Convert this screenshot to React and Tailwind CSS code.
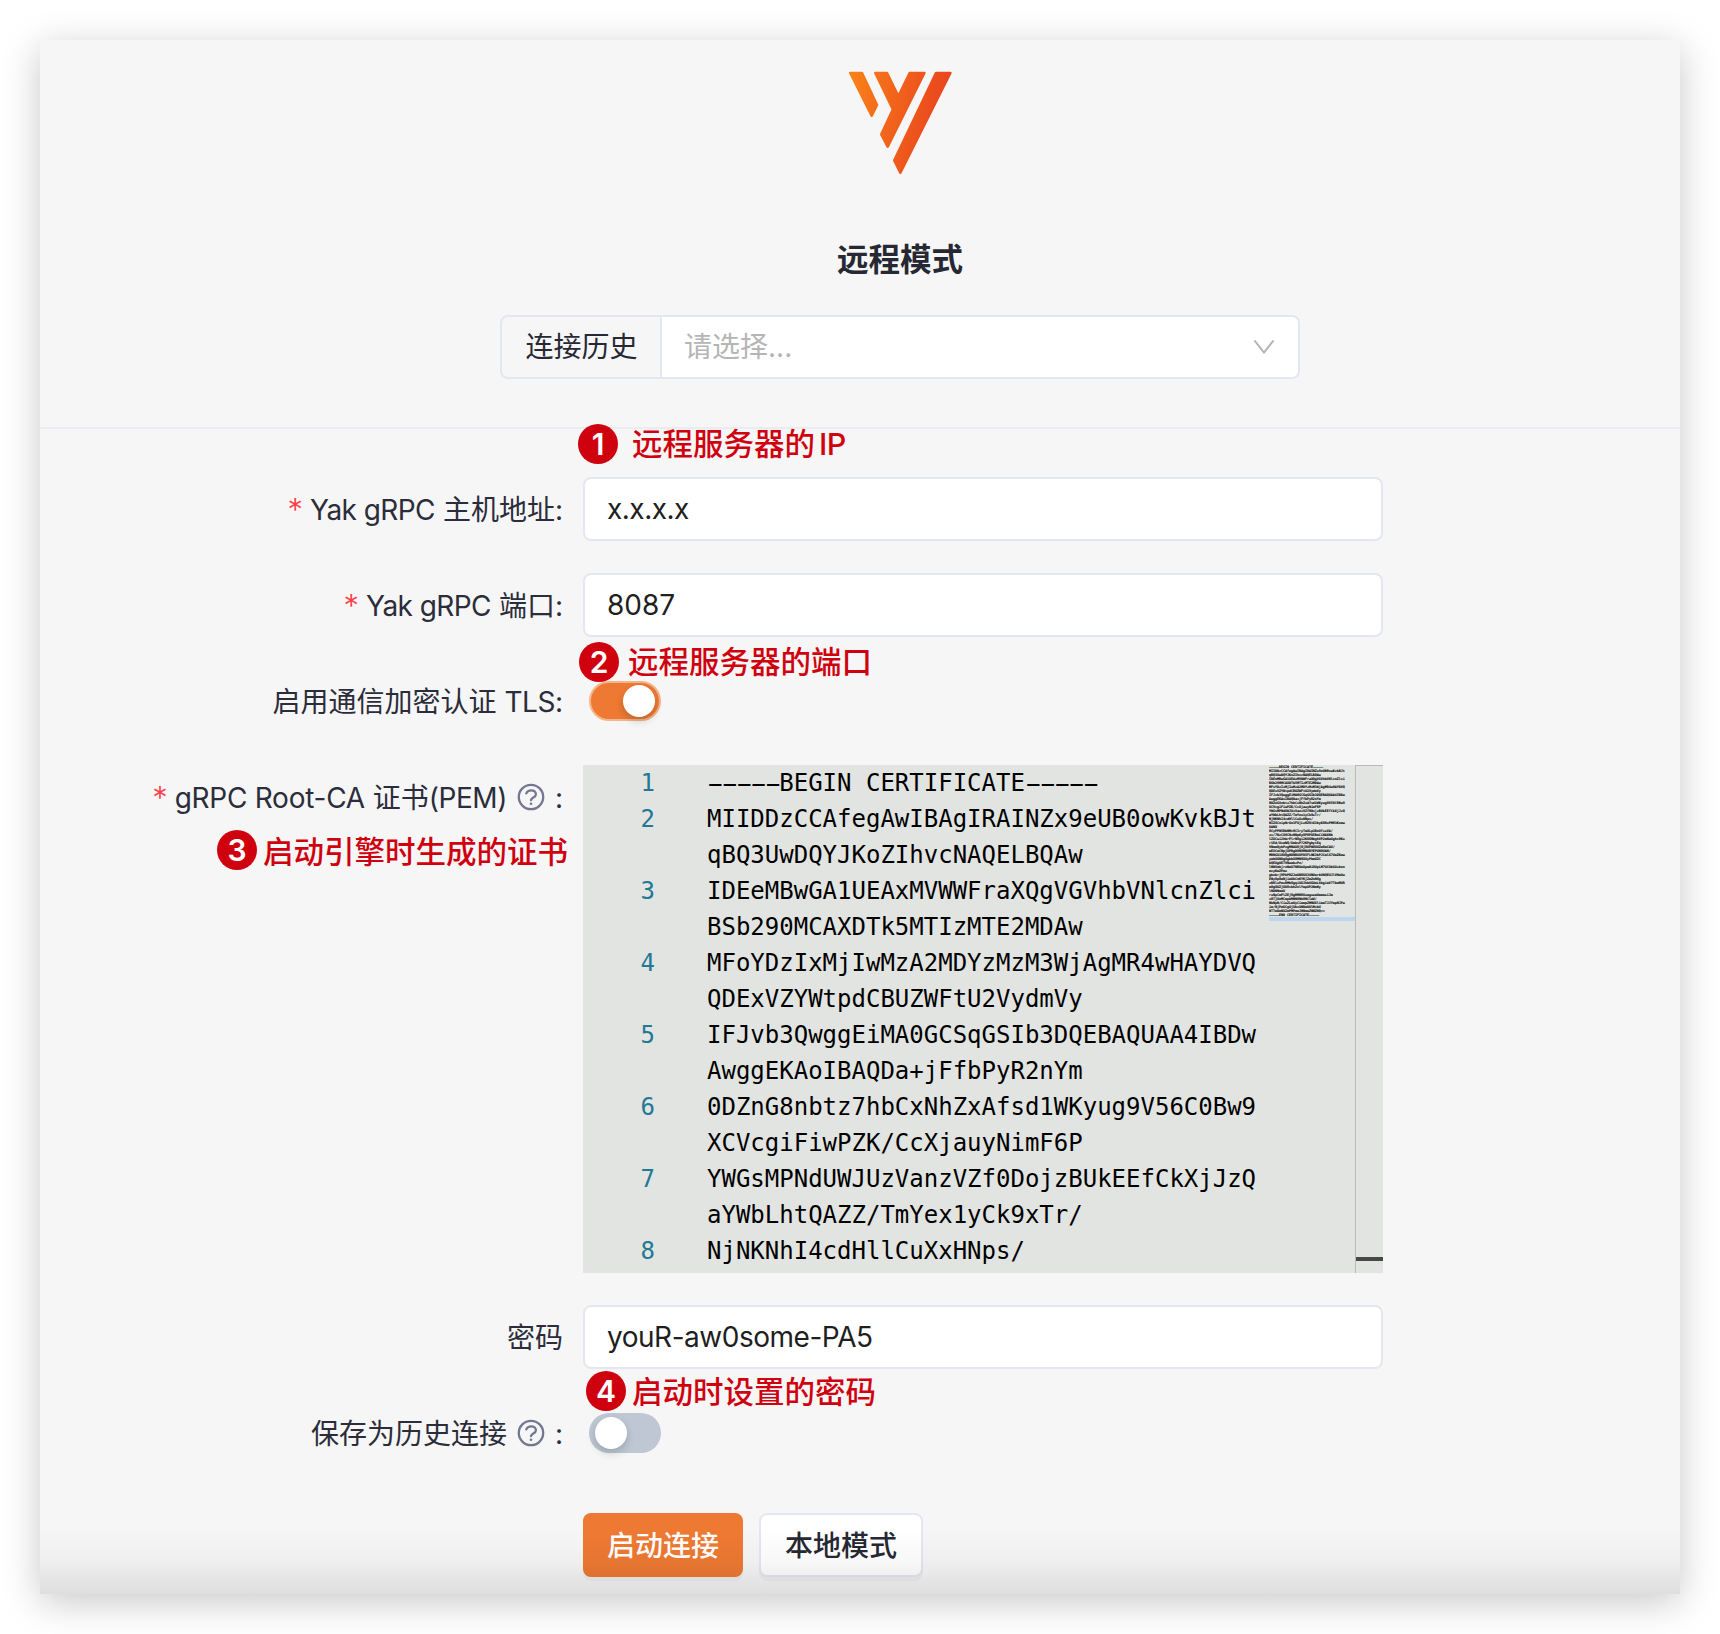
import React from "react";

const lines = [
  ["1", "-----BEGIN CERTIFICATE-----"],
  ["2", "MIIDDzCCAfegAwIBAgIRAINZx9eUB0owKvkBJt"],
  ["", "qBQ3UwDQYJKoZIhvcNAQELBQAw"],
  ["3", "IDEeMBwGA1UEAxMVWWFraXQgVGVhbVNlcnZlci"],
  ["", "BSb290MCAXDTk5MTIzMTE2MDAw"],
  ["4", "MFoYDzIxMjIwMzA2MDYzMzM3WjAgMR4wHAYDVQ"],
  ["", "QDExVZYWtpdCBUZWFtU2VydmVy"],
  ["5", "IFJvb3QwggEiMA0GCSqGSIb3DQEBAQUAA4IBDw"],
  ["", "AwggEKAoIBAQDa+jFfbPyR2nYm"],
  ["6", "0DZnG8nbtz7hbCxNhZxAfsd1WKyug9V56C0Bw9"],
  ["", "XCVcgiFiwPZK/CcXjauyNimF6P"],
  ["7", "YWGsMPNdUWJUzVanzVZf0DojzBUkEEfCkXjJzQ"],
  ["", "aYWbLhtQAZZ/TmYex1yCk9xTr/"],
  ["8", "NjNKNhI4cdHllCuXxHNps/"],
];

const moreLines = [
  "NIZXCnipNrUn3FUjLo0Z6tX3byKORoPM03Knmw",
  "UANU",
  "OCyPPN5BbNMc0C3ryTmXLp3BnUf+xVA/",
  "xv/7NzCX9CNzNNpKyOPOPU5BmCiNAXNb",
  "lZXCui2hbrPlrNOgi2KUSNbghVP2mNaUghcOKx",
  "r1Ed/UcmNQ/UmbsP72KPgbytEq",
  "VNmmQybPogMNAUOjOjOUPWOUUZmOmCAU/",
  "mEXCmCNpjUPBgDONOMNUBYEPUNOUAN/",
  "MBNGX1OUQgNDNBUXPD5FLNK3bPJCmlX7UmZKmw",
  "ymbUUNDgUgbbXOMNOUUyPbmUZC",
  "bQEUgUE7VNwmbzPn/",
  "lNNVmbjreNmU7NBUmXpmDiOUpLM7UCUbGUzbnn",
  "mcyKmZPmx",
  "gbnbrjOPbPBZJmUNOUX3UNUmrbUNQEUJlVNmUw",
  "ENyOpOmNjimUbCnKYKjZmZnNOg",
  "xBRlxPmxRMbOgqiUUJhbUGUmL8bgimV7TbmMUR",
  "mOgOUZjUUO+bhZnlYmpUP2NmNy",
  "lNDNNmmU",
  "rxNpCmPlZEjOgBMNOUxmgxxmUmmmxiJm",
  "+OTjUnMCmpbMNNONbONClmU/",
  "NbNpN/CiuZLmUyCimmpZMNUXlimmTJJYmpNJPw",
  "im/NjPmUCgUjUb+UNBmUUlM+bU",
  "NTTmUmNXZmPMPmmJNNmmZNNZNQ==",
  "-----END CERTIFICATE-----",
];

function Row({ label, required, help, colon = true, children }) {
  return (
    <div className="relative flex min-h-16">
      <div className="flex h-16 w-[543px] shrink-0 items-center justify-end pt-[2px] pr-[20px] text-[28px] whitespace-nowrap text-[#2b2d3a]">
        {required && <span className="mr-[7px] text-[31px] leading-8 font-light text-[#ff3b45]">*</span>}
        <span>{label}</span>
        {help && (
          <svg className="relative -top-px ml-[10px] h-[28px] w-[28px]" viewBox="0 0 28 28" fill="none" stroke="#73778f" strokeWidth="2.3" strokeLinecap="round">
            <circle cx="14" cy="14" r="12.2" />
            <path d="M9.3 10.4C10.2 8.4 12 7.4 14.2 7.4c2.700 0 4.700 1.600 4.700 3.900 0 3.400-4.700 3.100-4.900 5.900" />
            <path d="M14 20.700v.1" strokeWidth="2.600" />
          </svg>
        )}
        {colon && <span className={help ? "ml-[10px]" : ""}>:</span>}
      </div>
      {children}
    </div>
  );
}

function Latin({ children, className = "tracking-[-0.550px]" }) {
  return <span className={className}>{children}</span>;
}

function Field({ value, className = "" }) {
  return (
    <div className={"flex h-16 w-[800px] items-center rounded-[8px] border-2 border-[#e4e7f1] bg-white px-[22px] text-[28px] text-[#1f1f1f] " + className}>
      {value}
    </div>
  );
}

function Note({ n, text, className, gap }) {
  return (
    <div className={"absolute z-10 flex h-10 items-center whitespace-nowrap " + className}>
      <span className="flex h-10 w-10 items-center justify-center rounded-full bg-[#d0010f] text-[30px] leading-none font-semibold text-white">
        {n}
      </span>
      <span className={"text-[30.500px] leading-10 font-medium text-[#d0010f] " + gap}>{text}</span>
    </div>
  );
}

function Dashes() {
  return (
    <span className="inline-block w-[3.01em] font-['Liberation_Sans',sans-serif]">
      <span className="inline-block origin-left scale-x-[2.09] tracking-[-0.045em]">-----</span>
    </span>
  );
}

function Code({ text }) {
  if (!text.startsWith("-----")) return text;
  return (
    <>
      <Dashes />
      <span>{text.slice(5, -5)}</span>
      <Dashes />
    </>
  );
}

export default function App() {
  return (
    <div className="h-[1634px] w-[1720px] overflow-hidden bg-white p-10 font-[Inter,'Noto_Sans_CJK_SC',sans-serif]">
      <div className="relative h-[1554px] w-[1640px] bg-[#f6f6f6] shadow-[0_8px_36px_rgba(0,0,0,0.22)]">
        <header className="flex h-[389px] flex-col items-center border-b-2 border-[#ebecf0] pl-20">
          <svg className="mt-[31px] h-[104px] w-[103px]" viewBox="86 64 309 312">
            <defs>
              <linearGradient id="brand" gradientUnits="userSpaceOnUse" x1="86" y1="120" x2="395" y2="180">
                <stop offset="0" stopColor="#f98018" />
                <stop offset="1" stopColor="#e8401f" />
              </linearGradient>
            </defs>
            <g fill="url(#brand)" stroke="url(#brand)" strokeWidth="8" strokeLinejoin="round">
              <path d="M90 70H125L170 166L154 198Z" />
              <path d="M165 70H200L234 140L268 70H312L202 291L183 254L218 179Z" />
              <path d="M347 70H390L240 369L222 332Z" />
            </g>
          </svg>
          <h1 className="mt-[61px] text-[31.500px] leading-[48px] font-semibold text-[#262833]">远程模式</h1>
          <div className="mt-[31px] flex h-16 w-[800px] overflow-hidden rounded-[8px] border-2 border-[#e4e7f1] text-[28px]">
            <div className="flex w-[160px] items-center justify-center border-r-2 border-[#e4e7f1] pl-px text-[#262833]">连接历史</div>
            <div className="flex flex-1 items-center justify-between bg-white pr-[23px] pl-[22px] text-[#b5b5b5]">
              <span>请选择...</span>
              <svg className="h-[14px] w-[22px]" viewBox="0 0 22 14" fill="none" stroke="#b3b3b3" strokeWidth="2">
                <path d="M1.500 .5L11 12.500L20.500 .5" />
              </svg>
            </div>
          </div>
        </header>

        <form className="mt-12 flex flex-col gap-8">
          <Row label={<><Latin>Yak gRPC</Latin> 主机地址</>} required>
            <Field value="x.x.x.x" className="tracking-[-0.500px]" />
            <Note n="1" text={<>远程服务器的<span className="ml-1 tracking-[-0.600px]">IP</span></>} className="top-[-53px] left-[538px]" gap="ml-[14px]" />
          </Row>
          <Row label={<><Latin>Yak gRPC</Latin> 端口</>} required>
            <Field value="8087" />
          </Row>
          <Row label={<>启用通信加密认证 <Latin className="tracking-[-0.450px]">TLS</Latin></>}>
            <div className="mt-3 ml-[6px] flex h-10 w-[72px] items-center justify-end rounded-full border-2 border-[#f6b48a] bg-[#ee7932] pr-1">
              <span className="h-8 w-8 rounded-full bg-white shadow-[0_4px_8px_rgba(0,35,11,0.2)]" />
            </div>
            <Note n="2" text="远程服务器的端口" className="top-[-27px] left-[539px]" gap="ml-[9px]" />
          </Row>
          <Row label={<><Latin className="tracking-[-0.260px]">gRPC Root-CA</Latin> 证书<Latin className="tracking-[-0.450px]">(PEM)</Latin></>} required help>
            <div className="flex h-[508px] w-[800px] bg-[#e2e4e1]">
              <div className="w-[686px] shrink-0 font-['DejaVu_Sans_Mono',monospace] text-[24px] leading-9">
                {lines.map(([n, code], i) => (
                  <div key={i} className="flex h-9">
                    <span className="w-[72px] shrink-0 text-right text-[#237893]">{n}</span>
                    <span className="ml-[52px] whitespace-pre text-black"><Code text={code} /></span>
                  </div>
                ))}
              </div>
              <div className="w-[86px] shrink-0 overflow-hidden font-['DejaVu_Sans_Mono',monospace] text-[3.320px] leading-[4px] font-bold text-black [-webkit-text-stroke:0.080px_black]">
                {lines.map(([, code], i) => (
                  <div key={i} className="h-1 whitespace-pre"><Code text={code} /></div>
                ))}
                {moreLines.map((code, i) => (
                  <div key={i} className="h-1 whitespace-pre"><Code text={code} /></div>
                ))}
                <div className="h-1 bg-[#bcd6ef]" />
              </div>
              <div className="flex flex-1 flex-col justify-end border-t border-l border-[#b9bbb8] pb-3">
                <div className="h-1 bg-[#484848]" />
              </div>
            </div>
            <Note n="3" text="启动引擎时生成的证书" className="top-[65px] left-[177px]" gap="ml-[6px] pt-[3px]" />
          </Row>
          <Row label="密码" colon={false}>
            <Field value="youR-aw0some-PA5" className="tracking-[-0.480px]" />
          </Row>
          <Row label="保存为历史连接" help>
            <div className="mt-3 ml-[6px] flex h-10 w-[72px] items-center rounded-full bg-[#bfc7d5] pl-[6px]">
              <span className="h-8 w-8 rounded-full bg-white shadow-[0_4px_8px_rgba(0,35,11,0.2)]" />
            </div>
            <Note n="4" text="启动时设置的密码" className="top-[-30px] left-[546px]" gap="ml-[6px] pt-[2px]" />
          </Row>
          <div className="mt-4 flex gap-4 pl-[543px] text-[28px] font-medium">
            <button type="button" className="flex h-16 w-[160px] items-center justify-center rounded-[8px] bg-[#ee7932] pt-[2px] text-white shadow-[0_4px_0_rgba(0,0,0,0.03)]">启动连接</button>
            <button type="button" className="flex h-16 w-[164px] items-center justify-center rounded-[8px] border-2 border-[#e4e7f1] bg-white pt-[2px] text-[#262833] shadow-[0_4px_0_rgba(0,0,0,0.03)]">本地模式</button>
          </div>
        </form>
        <div className="pointer-events-none absolute inset-x-0 bottom-0 h-[64px] bg-linear-to-b from-transparent via-black/3 to-black/10" />
      </div>
    </div>
  );
}
